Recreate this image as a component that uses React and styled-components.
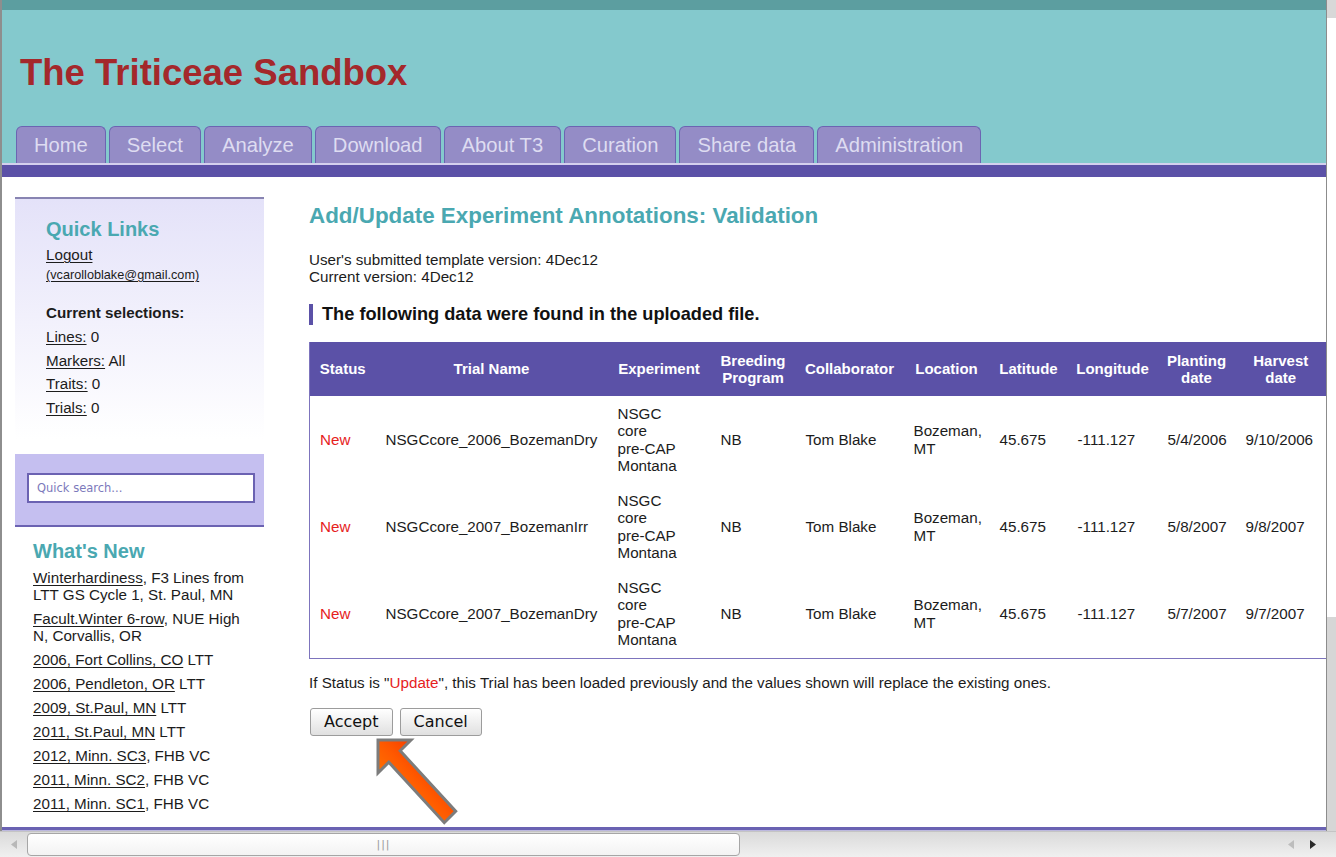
import React from "react";
import styled, { createGlobalStyle } from "styled-components";

const GlobalStyle = createGlobalStyle`
  html, body { margin: 0; padding: 0; background: #fff; overflow: hidden; }
  body { font-family: "Liberation Sans", Arial, sans-serif; color: #1c1c1c; }
`;

const Frame = styled.div`
  position: relative;
  width: 1336px;
  height: 857px;
  overflow: hidden;
  display: flex;
  flex-direction: column;
`;

const Window = styled.div`
  display: flex;
  height: 831px;
`;

const Page = styled.div`
  width: 1326px;
  box-sizing: border-box;
  border-left: 2px solid #8e8e8e;
  display: flex;
  flex-direction: column;
  flex-shrink: 0;
`;

const TopStrip = styled.div`
  height: 10px;
  background: #5c9ea0;
`;

const Header = styled.header`
  height: 153px;
  background: #84c9cd;
  display: flex;
  flex-direction: column;
`;

const Title = styled.h1`
  margin: 43px 0 0 18px;
  font-size: 36.5px;
  line-height: 40px;
  font-weight: 700;
  color: #a4282b;
`;

const TabRow = styled.nav`
  margin-top: 33px;
  padding-left: 14px;
  height: 37px;
  display: flex;
  align-items: flex-end;
  gap: 3px;
`;

const Tab = styled.div`
  height: 37px;
  box-sizing: border-box;
  padding: 0 17px;
  border: 1px solid #6c64b2;
  border-bottom: none;
  border-radius: 6px 6px 0 0;
  background: #948cc6;
  color: #dedcf1;
  font-size: 20.2px;
  line-height: 36px;
  white-space: nowrap;
`;

const TabRule = styled.div`
  height: 2px;
  background: #d4d0ee;
`;

const PurpleBar = styled.div`
  height: 12px;
  background: #5b51a7;
`;

const Body = styled.div`
  display: flex;
  height: 650px;
  overflow: hidden;
`;

const Sidebar = styled.aside`
  width: 249px;
  margin-left: 13px;
  flex-shrink: 0;
  padding-top: 20px;
  font-size: 15.2px;
`;

const LinksBox = styled.section`
  border-top: 2px solid #8884b2;
  background: linear-gradient(#e4e2f9, #ffffff);
  padding: 18px 0 22px 31px;
`;

const SideHeading = styled.h3`
  margin: 0;
  font-size: 20px;
  line-height: 24px;
  font-weight: 700;
  color: #4aa8b1;
`;

const Link = styled.span`
  text-decoration: underline;
  text-underline-offset: 2px;
  text-decoration-thickness: 1px;
  color: #1c1c1c;
`;

const SideLine = styled.div`
  line-height: 18px;
  margin-top: ${(p) => p.$mt || 0}px;
  font-size: ${(p) => p.$size || 15.2}px;
  font-weight: ${(p) => (p.$bold ? 700 : 400)};
`;

const SearchPanel = styled.div`
  margin-top: 15px;
  background: #c5bff0;
  border-bottom: 2px solid #6b62b2;
  padding: 19px 9px 22px 12px;
`;

const SearchBox = styled.div`
  height: 30px;
  box-sizing: border-box;
  border: 2px solid #6b62b2;
  background: #fff;
  padding-left: 8px;
  font-family: "DejaVu Sans", sans-serif;
  font-size: 11.5px;
  line-height: 26px;
  color: #7c79bb;
`;

const NewsSection = styled.section`
  padding: 12px 0 0 18px;
`;

const NewsList = styled.ul`
  list-style: none;
  margin: 6px 0 0;
  padding: 0;
  width: 215px;
`;

const NewsItem = styled.li`
  line-height: 17px;
  margin-bottom: 7px;
`;

const Main = styled.main`
  margin-left: 45px;
  width: 1017px;
  flex-shrink: 0;
  padding-top: 26px;
  font-size: 15.2px;
`;

const PageTitle = styled.h2`
  margin: 0;
  font-size: 22.4px;
  line-height: 26px;
  font-weight: 700;
  color: #4aa8b1;
`;

const Versions = styled.p`
  margin: 22px 0 0;
  line-height: 17px;
`;

const Callout = styled.h4`
  margin: 19px 0 0;
  border-left: 4px solid #5b51a7;
  padding-left: 9px;
  font-size: 18.2px;
  line-height: 21px;
  font-weight: 700;
  color: #111;
`;

const Table = styled.table`
  margin-top: 17px;
  width: 1017px;
  table-layout: fixed;
  border-collapse: collapse;
  border: 1px solid #7d74bd;
  border-top: none;
`;

const Th = styled.th`
  background: #5b51a7;
  color: #fff;
  font-size: 15px;
  font-weight: 700;
  line-height: 17.5px;
  padding: 9.5px 4px;
  text-align: center;
  white-space: nowrap;
`;

const Td = styled.td`
  padding: 8.6px 10px;
  line-height: 17.5px;
  font-size: 15.2px;
  white-space: nowrap;
  vertical-align: middle;
  color: ${(p) => (p.$red ? "#e6211d" : "#1c1c1c")};
`;

const Note = styled.p`
  margin: 15px 0 0;
  line-height: 17px;
`;

const Red = styled.span`
  color: #e6211d;
`;

const ButtonRow = styled.div`
  margin-top: 17px;
  display: flex;
  gap: 7px;
  padding-left: 1px;
`;

const Button = styled.button`
  height: 28px;
  padding: 0 13px;
  border: 1px solid #9c9c9c;
  border-radius: 3px;
  background: linear-gradient(#ffffff, #e0e0e0);
  font-family: "DejaVu Sans", sans-serif;
  font-size: 16px;
  color: #111;
  line-height: 26px;
`;

const FooterRule = styled.div`
  height: 1px;
  border-top: 3px solid #6a62b2;
  background: #bcb8de;
`;

const VScroll = styled.div`
  width: 10px;
  box-sizing: border-box;
  border-left: 1px solid #8c8c8c;
  background: linear-gradient(#d8d8d8 0 18px, #ffffff 18px 617px, #d6d6d6 617px);
`;

const HScroll = styled.div`
  height: 26px;
  box-sizing: border-box;
  border-top: 1px solid #c4c4c4;
  background: linear-gradient(#dadada, #f0f0f0);
  display: flex;
  align-items: center;
`;

const ArrowCell = styled.div`
  width: ${(p) => p.$w}px;
  display: flex;
  align-items: center;
  justify-content: center;
  flex-shrink: 0;
`;

const Thumb = styled.div`
  width: 713px;
  height: 23px;
  box-sizing: border-box;
  border: 1px solid #a6a6a6;
  border-radius: 4px;
  background: linear-gradient(#ffffff, #f3f3f3);
  display: flex;
  align-items: center;
  justify-content: center;
  color: #9a9a9a;
  font-size: 11px;
  letter-spacing: 1px;
  font-family: "DejaVu Sans", sans-serif;
`;

const Spacer = styled.div`
  flex: 1;
`;

const PointerArrow = styled.svg`
  position: absolute;
  left: 370px;
  top: 732px;
  width: 95px;
  height: 100px;
  pointer-events: none;
`;

const tabs = ["Home", "Select", "Analyze", "Download", "About T3", "Curation", "Share data", "Administration"];

const news = [
  ["Winterhardiness", ", F3 Lines from LTT GS Cycle 1, St. Paul, MN"],
  ["Facult.Winter 6-row", ", NUE High N, Corvallis, OR"],
  ["2006, Fort Collins, CO", " LTT"],
  ["2006, Pendleton, OR", " LTT"],
  ["2009, St.Paul, MN", " LTT"],
  ["2011, St.Paul, MN", " LTT"],
  ["2012, Minn. SC3", ", FHB VC"],
  ["2011, Minn. SC2", ", FHB VC"],
  ["2011, Minn. SC1", ", FHB VC"],
];

const cols = [66, 232, 103, 85, 108, 86, 78, 90, 78, 91];
const heads = [["Status"], ["Trial Name"], ["Experiment"], ["Breeding", "Program"], ["Collaborator"], ["Location"], ["Latitude"], ["Longitude"], ["Planting", "date"], ["Harvest", "date"]];

const rows = [
  ["NSGCcore_2006_BozemanDry", "5/4/2006", "9/10/2006"],
  ["NSGCcore_2007_BozemanIrr", "5/8/2007", "9/8/2007"],
  ["NSGCcore_2007_BozemanDry", "5/7/2007", "9/7/2007"],
];

const Lines = ({ items }) =>
  items.map((t, i) => (
    <React.Fragment key={i}>
      {i > 0 && <br />}
      {t}
    </React.Fragment>
  ));

const Tri = ({ dir, color }) => (
  <svg width="8" height="9" viewBox="0 0 8 9">
    <polygon points={dir === "left" ? "7,0 7,9 1,4.5" : "1,0 1,9 7,4.5"} fill={color} />
  </svg>
);

export default function App() {
  return (
    <Frame>
      <GlobalStyle />
      <Window>
        <Page>
          <TopStrip />
          <Header>
            <Title>The Triticeae Sandbox</Title>
            <TabRow>
              {tabs.map((t) => (
                <Tab key={t}>{t}</Tab>
              ))}
            </TabRow>
          </Header>
          <TabRule />
          <PurpleBar />
          <Body>
            <Sidebar>
              <LinksBox>
                <SideHeading>Quick Links</SideHeading>
                <SideLine $mt={5}>
                  <Link>Logout</Link>
                </SideLine>
                <SideLine $mt={2} $size={12.7}>
                  <Link>(vcarolloblake@gmail.com)</Link>
                </SideLine>
                <SideLine $mt={20} $bold>Current selections:</SideLine>
                <SideLine $mt={6}><Link>Lines:</Link> 0</SideLine>
                <SideLine $mt={5.5}><Link>Markers:</Link> All</SideLine>
                <SideLine $mt={5.7}><Link>Traits:</Link> 0</SideLine>
                <SideLine $mt={5.7}><Link>Trials:</Link> 0</SideLine>
              </LinksBox>
              <SearchPanel>
                <SearchBox>Quick search...</SearchBox>
              </SearchPanel>
              <NewsSection>
                <SideHeading>What's New</SideHeading>
                <NewsList>
                  {news.map(([l, r]) => (
                    <NewsItem key={l}>
                      <Link>{l}</Link>
                      {r}
                    </NewsItem>
                  ))}
                </NewsList>
              </NewsSection>
            </Sidebar>
            <Main>
              <PageTitle>Add/Update Experiment Annotations: Validation</PageTitle>
              <Versions>
                User's submitted template version: 4Dec12
                <br />
                Current version: 4Dec12
              </Versions>
              <Callout>The following data were found in the uploaded file.</Callout>
              <Table>
                <colgroup>
                  {cols.map((w, i) => (
                    <col key={i} style={{ width: w }} />
                  ))}
                </colgroup>
                <thead>
                  <tr>
                    {heads.map((h, i) => (
                      <Th key={i}>
                        <Lines items={h} />
                      </Th>
                    ))}
                  </tr>
                </thead>
                <tbody>
                  {rows.map(([name, plant, harvest]) => (
                    <tr key={name}>
                      <Td $red>New</Td>
                      <Td>{name}</Td>
                      <Td><Lines items={["NSGC", "core", "pre-CAP", "Montana"]} /></Td>
                      <Td>NB</Td>
                      <Td>Tom Blake</Td>
                      <Td><Lines items={["Bozeman,", "MT"]} /></Td>
                      <Td>45.675</Td>
                      <Td>-111.127</Td>
                      <Td>{plant}</Td>
                      <Td>{harvest}</Td>
                    </tr>
                  ))}
                </tbody>
              </Table>
              <Note>
                If Status is "<Red>Update</Red>", this Trial has been loaded previously and the values shown will replace the existing ones.
              </Note>
              <ButtonRow>
                <Button>Accept</Button>
                <Button>Cancel</Button>
              </ButtonRow>
            </Main>
          </Body>
          <FooterRule />
        </Page>
        <VScroll />
      </Window>
      <HScroll>
        <ArrowCell $w={27}>
          <Tri dir="left" color="#b8b8b8" />
        </ArrowCell>
        <Thumb>|||</Thumb>
        <Spacer />
        <ArrowCell $w={22}>
          <Tri dir="left" color="#bdbdbd" />
        </ArrowCell>
        <ArrowCell $w={22}>
          <Tri dir="right" color="#2a2a2a" />
        </ArrowCell>
        <ArrowCell $w={12} />
      </HScroll>
      <PointerArrow viewBox="0 0 95 100">
        <defs>
          <linearGradient id="arrowFill" x1="0" y1="1" x2="1" y2="0">
            <stop offset="0" stopColor="#ff9200" />
            <stop offset="0.5" stopColor="#ff5a00" />
            <stop offset="1" stopColor="#e81a00" />
          </linearGradient>
        </defs>
        <polygon
          points="8,8 41,8 30.2,18.8 85.7,79.3 74.3,90.7 18.8,30.2 8,41"
          fill="url(#arrowFill)"
          stroke="#7c7c7c"
          strokeWidth="3"
          strokeLinejoin="miter"
        />
      </PointerArrow>
    </Frame>
  );
}
